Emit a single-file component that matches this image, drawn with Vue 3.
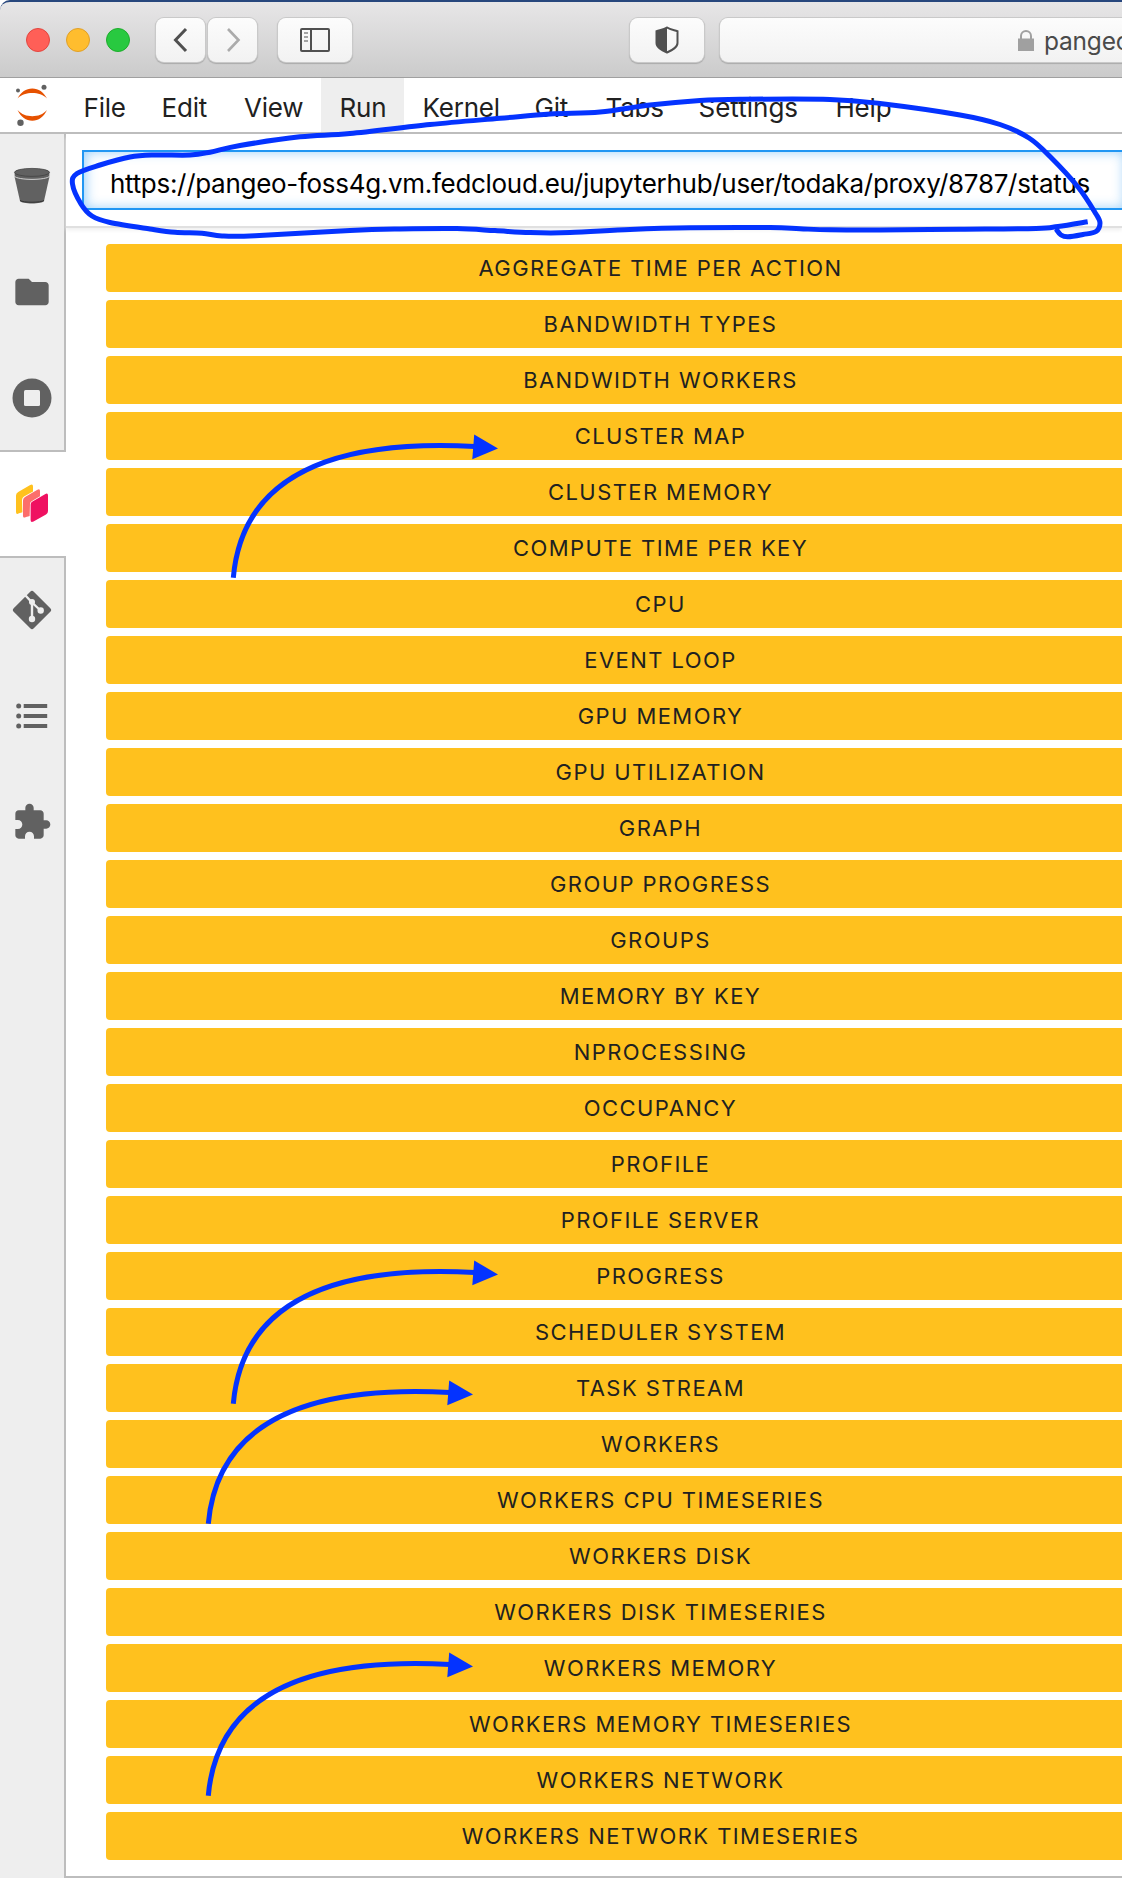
<script setup>
const menus = [
  { label: 'File', width: 78 },
  { label: 'Edit', width: 82.500 },
  { label: 'View', width: 95.500 },
  { label: 'Run', width: 83, active: true },
  { label: 'Kernel', width: 112 },
  { label: 'Git', width: 71 },
  { label: 'Tabs', width: 93 },
  { label: 'Settings', width: 137, tracking: 0 },
  { label: 'Help', width: 100 }
]

const charts = [
  'Aggregate Time Per Action', 'Bandwidth Types', 'Bandwidth Workers', 'Cluster Map',
  'Cluster Memory', 'Compute Time Per Key', 'CPU', 'Event Loop', 'GPU Memory',
  'GPU Utilization', 'Graph', 'Group Progress', 'Groups', 'Memory By Key', 'Nprocessing',
  'Occupancy', 'Profile', 'Profile Server', 'Progress', 'Scheduler System', 'Task Stream',
  'Workers', 'Workers CPU Timeseries', 'Workers Disk', 'Workers Disk Timeseries',
  'Workers Memory', 'Workers Memory Timeseries', 'Workers Network',
  'Workers Network Timeseries'
]

const arrows = [[0, 0], [0, 826], [-25, 946], [-25, 1218]]

// Hand-drawn loop round the address field
const loop = [
  [1087.7, 221.8], [1058, 226.5], [1036, 228.5], [960, 229.3], [880, 230], [830, 229.8],
  [800, 228.8], [770, 227.6], [690, 227.8], [630, 229.5], [570, 232.6], [530, 232.6],
  [495, 230.6], [457, 228.6], [400, 229], [350, 230.5], [255, 235.8], [222, 236],
  [202, 233.3], [175, 232.3], [150, 229], [110, 222.5], [92, 216], [81, 204], [72.5, 184],
  [77, 173.5], [100, 165], [130, 157], [155, 155], [190, 155], [210, 152.2], [240, 145.5],
  [300, 136.8], [350, 133.5], [430, 124.5], [500, 118.3], [550, 114], [600, 112],
  [650, 105], [700, 100.5], [740, 99.3], [830, 99.4], [880, 103.5], [960, 115],
  [1000, 124.5], [1029, 138], [1050, 156.5], [1078, 187], [1096, 214], [1100, 223],
  [1096, 231.5], [1083, 234.5], [1068, 236.8], [1061, 235], [1056, 229]
]

function smooth(p) {
  let d = `M${p[0]}`
  for (let i = 0; i < p.length - 1; i++) {
    const a = p[i - 1] || p[i]
    const b = p[i]
    const c = p[i + 1]
    const e = p[i + 2] || c
    d += `C${b[0] + (c[0] - a[0]) / 6},${b[1] + (c[1] - a[1]) / 6} `
    d += `${c[0] - (e[0] - b[0]) / 6},${c[1] - (e[1] - b[1]) / 6} ${c}`
  }
  return d
}
const loopPath = smooth(loop)
</script>

<template>
  <div class="screen">
    <header class="chrome">
      <div class="lights">
        <i class="light red"></i><i class="light amber"></i><i class="light green"></i>
      </div>
      <div class="nav">
        <button class="tool back">
          <svg width="16" height="26" viewBox="0 0 16 26"><path d="M13 2 2.500 13 13 24" fill="none" stroke="#505050" stroke-width="3" /></svg>
        </button>
        <button class="tool forward">
          <svg width="16" height="26" viewBox="0 0 16 26"><path d="M3 2 13.500 13 3 24" fill="none" stroke="#ababab" stroke-width="2.600" /></svg>
        </button>
      </div>
      <button class="tool side">
        <svg width="30" height="24" viewBox="0 0 30 24" fill="none" stroke="#505050" stroke-width="2">
          <rect x="1" y="1" width="28" height="22" rx="1" /><path d="M11 1v22" />
          <path d="M4 5h4M4 9h4M4 13h4" stroke="#888" stroke-width="1.600" />
        </svg>
      </button>
      <button class="tool shield">
        <svg width="24" height="28" viewBox="0 0 24 28">
          <path d="M12 1.500C9 3.500 5.500 4 1.500 5.300V17c0 4.500 5 7 10.500 9.500C17.500 24 22.500 21.500 22.500 17V5.300C18.500 4 15 3.500 12 1.500z" fill="none" stroke="#505050" stroke-width="2" />
          <path d="M12 1.500C9 3.500 5.500 4 1.500 5.300V17c0 4.500 5 7 10.500 9.500z" fill="#505050" />
        </svg>
      </button>
      <div class="tool address">
        <svg width="16" height="21" viewBox="0 0 16 21"><path d="M3 9V6a5 5 0 0 1 10 0v3" fill="none" stroke="#a0a0a0" stroke-width="2" /><path d="M0 8.500h16V21H0z" fill="#a0a0a0" /></svg>
        <span>pangeo</span>
      </div>
    </header>

    <nav class="menubar">
      <div class="logo">
        <svg width="32" height="42" viewBox="0 0 32 42">
          <path d="M1.500 14.500C5 8 10 4.500 16.300 4.500S27.500 8 31 14.500C27 10.500 22 9 16.300 9S5.500 10.500 1.500 14.500z" fill="#e65100" />
          <path d="M1.500 26C5 33 10 36.800 16.300 36.800S27.500 33 31 26C27 30.500 22 32.200 16.300 32.200S5.500 30.500 1.500 26z" fill="#e65100" />
          <circle cx="28" cy="3.200" r="2.500" fill="#616161" /><circle cx="2" cy="6.500" r="2" fill="#616161" /><circle cx="4.500" cy="38.800" r="3.200" fill="#616161" />
        </svg>
      </div>
      <div v-for="m in menus" :key="m.label" class="menu" :class="{ active: m.active, wide: m.tracking === 0 }" :style="{ width: m.width + 'px' }">{{ m.label }}</div>
    </nav>

    <main class="body">
      <aside class="rail">
        <div class="tab">
          <svg width="38" height="38" viewBox="0 0 38 38">
            <path d="M1.500 9.500h35L31 34c-1 3.300-23 3.300-24 0z" fill="#616161" />
            <path d="M7 33.500c3 2.300 21 2.300 24 0" fill="none" stroke="#333" stroke-width="1" />
            <path d="M1.200 5.500v3.500c3 4.500 32.600 4.500 35.600 0V5.500z" fill="#616161" stroke="#eee" stroke-width=".8" />
            <ellipse cx="19" cy="5.400" rx="17.500" ry="4" fill="#616161" stroke="#424242" stroke-width=".8" />
          </svg>
        </div>
        <div class="tab">
          <svg width="40" height="40" viewBox="0 0 24 24"><path d="M10 4H4c-1.100 0-2 .9-2 2v12c0 1.100.9 2 2 2h16c1.100 0 2-.9 2-2V8c0-1.100-.9-2-2-2h-8z" fill="#616161" /></svg>
        </div>
        <div class="tab">
          <svg width="40" height="40" viewBox="0 0 40 40"><circle cx="20" cy="20" r="19.500" fill="#616161" /><rect x="12" y="12" width="16" height="16" rx="1.500" fill="#eee" /></svg>
        </div>
        <div class="tab current">
          <svg width="36" height="40" viewBox="0 0 36 40">
            <path d="M2 12.500Q2 10 4.200 9L16.200 2Q19 .5 19 3.500V24Q19 26 17 27L5 30.300Q2 32 2 29z" fill="#ffc11e" />
            <path d="M8 17Q8 14.500 10 13.500L23 6.300Q26 4.500 26 7.500V29L12 35Q8.500 36.500 8.500 33z" fill="#fff" />
            <path d="M9 17.500Q9 15 11 14L23 7Q26 5.300 26 8V28Q26 30 24 31L12 34Q9 35.500 9 33z" fill="#fc6e6b" />
            <path d="M16 21Q16 19 18 18L31.500 10Q35 8 35 11.500V31L18 40Q15.500 40 15.500 38z" fill="#fff" />
            <path d="M16.600 21.500Q16.600 19.500 18.500 18.400L31 11.200Q34 9.500 34 12.500V28Q34 30.500 32 31.500L19.500 38.600Q16.600 40 16.600 37z" fill="#ef1161" />
          </svg>
        </div>
        <div class="tab">
          <svg width="40" height="40" viewBox="0 0 40 40">
            <rect x="5.800" y="5.800" width="28.400" height="28.400" rx="2.500" transform="rotate(45 20 20)" fill="#616161" />
            <path d="M13 5l7 7.500V28M20 12.500l8.500 8" fill="none" stroke="#eee" stroke-width="2.400" />
            <circle cx="20" cy="12" r="3" fill="#eee" /><circle cx="20" cy="29" r="3.200" fill="#eee" /><circle cx="28.700" cy="20.500" r="3.200" fill="#eee" />
          </svg>
        </div>
        <div class="tab">
          <svg width="32" height="26" viewBox="0 0 32 26" fill="#616161">
            <circle cx="2.700" cy="3" r="2.500" /><circle cx="2.700" cy="13" r="2.500" /><circle cx="2.700" cy="23" r="2.500" />
            <path d="M7.700 1h23.500v4H7.700zM7.700 11h23.500v4H7.700zM7.700 21h23.500v4H7.700z" />
          </svg>
        </div>
        <div class="tab">
          <svg width="40" height="40" viewBox="0 0 24 24"><path d="M20.500 11H19V7c0-1.100-.9-2-2-2h-4V3.500C13 2.120 11.880 1 10.500 1S8 2.120 8 3.500V5H4c-1.100 0-1.990.9-1.990 2v3.800H3.500c1.490 0 2.700 1.210 2.700 2.700s-1.210 2.700-2.700 2.700H2V20c0 1.100.9 2 2 2h3.800v-1.500c0-1.490 1.210-2.700 2.700-2.700 1.490 0 2.700 1.210 2.700 2.700V22H17c1.100 0 2-.9 2-2v-4h1.500c1.380 0 2.500-1.120 2.500-2.500S21.880 11 20.500 11z" fill="#616161" /></svg>
        </div>
        <div class="filler"></div>
      </aside>

      <section class="panel">
        <div class="search">
          <div class="field">https://pangeo-foss4g.vm.fedcloud.eu/jupyterhub/user/todaka/proxy/8787/status</div>
        </div>
        <div class="charts">
          <button v-for="c in charts" :key="c" class="chart">{{ c }}</button>
        </div>
      </section>
    </main>

    <svg class="ink" width="1122" height="1878" viewBox="0 0 1122 1878">
      <path :d="loopPath" fill="none" stroke="#0433ff" stroke-width="5" />
      <g v-for="(a, i) in arrows" :key="i" :transform="`translate(${a[0]} ${a[1]})`">
        <path d="M233.300 577.700Q246 434 475 446.400" fill="none" stroke="#0433ff" stroke-width="5" />
        <path d="M474.200 434.500 498 448.500 472.300 459.200z" fill="#0433ff" />
      </g>
    </svg>
  </div>
</template>

<style>
body { margin: 0; overflow: hidden; }
</style>

<style scoped>
.screen {
  position: relative;
  width: 1122px;
  height: 1878px;
  overflow: hidden;
  display: flex;
  flex-direction: column;
  background: #fff;
  font-family: Inter, "Liberation Sans", sans-serif;
}
.screen * { box-sizing: border-box; }
svg { display: block; flex: none; }
button { font: inherit; padding: 0; border: 0; }

.chrome {
  height: 78px;
  flex: none;
  display: flex;
  align-items: flex-start;
  padding: 16px 0 0 26px;
  border-bottom: 1px solid #a0a0a0;
  border-top-left-radius: 10px;
  background: linear-gradient(#e7e6e7, #cbcbcb);
  border-top: 2px solid #28477d;
}
.lights { display: flex; gap: 16px; padding-top: 10px; width: 130px; }
.light { width: 24px; height: 24px; border-radius: 50%; border: 1px solid; }
.red { background: #ff5f57; border-color: #e2463f; }
.amber { background: #ffbd2e; border-color: #e0a028; }
.green { background: #28c940; border-color: #1dad2b; }
.nav { display: flex; gap: 3px; width: 122px; }
.tool {
  height: 44px;
  display: flex;
  align-items: center;
  justify-content: center;
  border-radius: 8px;
  background: linear-gradient(#fcfcfc, #f2f2f2);
  box-shadow: 0 0 0 1px #c9c9c9, 0 1px 1px 1px #aaa;
}
.back, .forward { width: 49px; }
.side { width: 74px; }
.shield { width: 74px; margin-left: 278px; }
.address {
  flex: 1;
  min-width: 0;
  justify-content: flex-start;
  margin-left: 16px;
  padding-left: 298px;
  gap: 10px;
  border-radius: 8px 0 0 8px;
  overflow: hidden;
  font-size: 24.500px;
  line-height: 46px;
  letter-spacing: -0.200px;
  color: #4a4a4a;
}
.address span { padding-top: 2px; }

.menubar {
  height: 56px;
  flex: none;
  display: flex;
  border-bottom: 2px solid #bdbdbd;
}
.logo { width: 65px; padding: 6px 0 0 16px; }
.menu {
  height: 54px;
  padding-left: 19px;
  line-height: 59px;
  font-size: 26px;
  letter-spacing: -0.200px;
  color: #212121;
  white-space: nowrap;
  text-indent: -0.500px;
}
.wide { letter-spacing: 0; }
.active { background: #eee; }

.body { flex: 1; display: flex; min-height: 0; }
.rail { width: 66px; flex: none; display: flex; flex-direction: column; }
.tab {
  height: 106px;
  flex: none;
  display: flex;
  align-items: center;
  justify-content: center;
  padding-bottom: 2px;
  background: #eee;
  border-right: 2px solid #bdbdbd;
}
.tab.current {
  height: 108px;
  margin-top: -2px;
  border: solid #bdbdbd;
  border-width: 2px 0;
  background: #fff;
  padding-right: 2px;
}
.filler { flex: 1; background: #eee; border-right: 2px solid #bdbdbd; }

.panel {
  flex: 1;
  min-width: 0;
  display: flex;
  flex-direction: column;
  border-bottom: 2px solid #bdbdbd;
}
.search {
  height: 92px;
  flex: none;
  padding: 16px 0 0 16px;
  box-shadow: 0 2px 0 #e0e0e0, 0 4px 4px #eee;
}
.field {
  height: 60px;
  padding-left: 26px;
  border: 2px solid #2196f3;
  border-right: 0;
  box-shadow: inset 2px 0 12px rgba(33, 150, 243, .45);
  line-height: 63px;
  font-size: 26px;
  letter-spacing: -0.298px;
  color: #000;
  white-space: nowrap;
}
.charts {
  width: 1109px;
  display: flex;
  flex-direction: column;
  gap: 8px;
  padding-top: 18px;
  margin-left: 40px;
}
.chart {
  height: 48px;
  border-radius: 4px;
  background: #ffc11e;
  color: #212121;
  font-size: 22px;
  line-height: 49px;
  letter-spacing: 1.420px;
  text-transform: uppercase;
}

.ink { position: absolute; left: 0; top: 0; }
</style>
